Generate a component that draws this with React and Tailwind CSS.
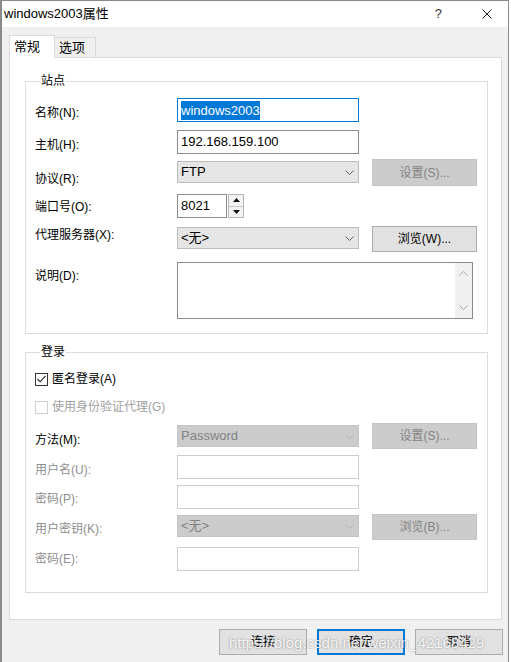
import React from 'react'

function Chevron({ color = '#606060' }) {
  return (
    <svg width="9" height="5" viewBox="0 0 9 5">
      <path d="M0.5 0.5 L4.5 4.5 L8.5 0.5" fill="none" stroke={color} strokeWidth="1" />
    </svg>
  )
}

function Row({ className, labelClass, label, disabled, children }) {
  return (
    <div className={`flex items-start ${className}`}>
      <div className={`w-[142px] shrink-0 text-[12px] leading-[16px] ${disabled ? 'text-[#8d8d8d]' : 'text-black'} ${labelClass}`}>
        {label}
      </div>
      {children}
    </div>
  )
}

function TextBox({ children, disabled, focused, className = 'w-[182px]' }) {
  return (
    <div
      className={`${className} h-[24px] flex items-center pl-[3px] bg-white border text-[13px] ${
        focused ? 'border-[#0078d7]' : disabled ? 'border-[#cccccc]' : 'border-[#8c8c8c]'
      }`}
    >
      {children}
    </div>
  )
}

function Combo({ value, disabled, className }) {
  return (
    <div
      className={`w-[182px] h-[22px] flex items-center justify-between pl-[3px] pr-[4px] border text-[13px] ${
        disabled ? 'bg-[#cccccc] border-[#c4c4c4] text-[#838383]' : 'bg-[#e5e5e5] border-[#bdbdbd] text-black'
      } ${className}`}
    >
      <span>{value}</span>
      <Chevron color={disabled ? '#b3b3b3' : '#606060'} />
    </div>
  )
}

function Btn({ children, disabled, className }) {
  return (
    <div
      className={`ml-[13px] w-[105px] flex items-center justify-center border text-[12px] ${
        disabled ? 'bg-[#cccccc] border-[#c4c4c4] text-[#838383]' : 'bg-[#e1e1e1] border-[#adadad] text-black'
      } ${className}`}
    >
      {children}
    </div>
  )
}

function CheckBox({ checked, disabled, label }) {
  return (
    <div className="flex items-center h-[16px]">
      <div
        className={`w-[13px] h-[13px] border bg-white flex items-center justify-center ${
          disabled ? 'border-[#cfcfcf]' : 'border-[#333333]'
        }`}
      >
        {checked && (
          <svg width="9" height="8" viewBox="0 0 9 8">
            <path d="M0.5 4 L3.2 6.8 L8.5 0.8" fill="none" stroke="#222" strokeWidth="1.1" />
          </svg>
        )}
      </div>
      <span className={`ml-[4px] text-[12px] leading-[16px] ${disabled ? 'text-[#a0a0a0]' : 'text-black'}`}>{label}</span>
    </div>
  )
}

export default function App() {
  return (
    <div className="relative w-[511px] h-[662px] bg-white overflow-hidden font-['Liberation_Sans','Noto_Sans_CJK_SC',sans-serif]">
      <div className="w-[509px] h-[662px] flex flex-col border-t border-l-2 border-r border-[#8a8a8a] bg-[#f0f0f0]">
        {/* title bar */}
        <div className="h-[26px] shrink-0 bg-white flex items-center pl-[2px]">
          <span className="text-[13px] text-black">windows2003属性</span>
          <span className="ml-auto text-[13px] text-[#333]">?</span>
          <svg className="ml-[40px] mr-[16px]" width="10" height="10" viewBox="0 0 10 10">
            <path d="M0.5 0.5 L9.5 9.5 M9.5 0.5 L0.5 9.5" stroke="#222" strokeWidth="1" />
          </svg>
        </div>

        {/* tabs */}
        <div className="flex items-end mt-[8px] ml-[7px] h-[22px]">
          <div className="relative z-10 h-[23px] -mb-px w-[46px] bg-white border-x border-t border-[#d9d9d9] pl-[4px] pt-[2px] text-[13px] leading-[18px]">
            常规
          </div>
          <div className="h-[20px] w-[42px] -ml-px border-x border-t border-[#d9d9d9] bg-[#f0f0f0] pl-[4px] text-[13px] leading-[20px]">
            选项
          </div>
        </div>

        {/* panel */}
        <div className="ml-[7px] w-[493px] h-[563px] shrink-0 bg-white border border-[#d9d9d9]">
          <fieldset className="mt-[15px] ml-[15px] w-[463px] border border-[#dcdcdc] pb-[14px] pl-[9px]">
            <legend className="ml-[5px] px-[1px] text-[12px] leading-[16px]">站点</legend>
            <Row className="mt-[9px] h-[24px]" labelClass="mt-[7px]" label="名称(N):">
              <TextBox focused>
                <span className="bg-[#0078d7] text-white leading-[19px]">windows2003</span>
              </TextBox>
            </Row>
            <Row className="mt-[8px] h-[24px]" labelClass="mt-[7px]" label="主机(H):">
              <TextBox>192.168.159.100</TextBox>
            </Row>
            <Row className="mt-[5px] h-[27px]" labelClass="mt-[12px]" label="协议(R):">
              <Combo value="FTP" className="mt-[2px]" />
              <Btn disabled className="h-[27px]">设置(S)...</Btn>
            </Row>
            <Row className="mt-[8px] h-[24px]" labelClass="mt-[5px]" label="端口号(O):">
              <TextBox className="w-[50px]">8021</TextBox>
              <div className="ml-px w-[16px] h-[24px] flex flex-col border border-[#b5b5b5] bg-[#f3f3f3]">
                <div className="flex-1 flex items-center justify-center border-b border-[#c8c8c8]">
                  <svg width="7" height="4" viewBox="0 0 7 4"><path d="M0 4 L3.5 0 L7 4 Z" fill="#111" /></svg>
                </div>
                <div className="flex-1 flex items-center justify-center">
                  <svg width="7" height="4" viewBox="0 0 7 4"><path d="M0 0 L3.5 4 L7 0 Z" fill="#111" /></svg>
                </div>
              </div>
            </Row>
            <Row className="mt-[8px] h-[26px]" labelClass="mt-[1px]" label="代理服务器(X):">
              <Combo value="<无>" className="mt-[1px]" />
              <Btn className="h-[26px]">浏览(W)...</Btn>
            </Row>
            <Row className="mt-[10px] h-[57px]" labelClass="mt-[6px]" label="说明(D):">
              <div className="w-[296px] h-[57px] border border-[#8c8c8c] bg-white flex justify-end">
                <div className="w-[17px] h-full bg-[#f0f0f0] flex flex-col items-center justify-between py-[8px]">
                  <svg width="9" height="5" viewBox="0 0 9 5"><path d="M0.5 4.5 L4.5 0.5 L8.5 4.5" fill="none" stroke="#a6a6a6" strokeWidth="1" /></svg>
                  <Chevron color="#a6a6a6" />
                </div>
              </div>
            </Row>
          </fieldset>

          <fieldset className="mt-[10px] ml-[15px] w-[463px] border border-[#dcdcdc] pb-[21px] pl-[9px]">
            <legend className="ml-[5px] px-[1px] text-[12px] leading-[16px]">登录</legend>
            <div className="mt-[11px]">
              <CheckBox checked label="匿名登录(A)" />
            </div>
            <div className="mt-[12px]">
              <CheckBox disabled label="使用身份验证代理(G)" />
            </div>
            <Row className="mt-[8px] h-[26px]" labelClass="mt-[9px]" label="方法(M):">
              <Combo disabled value="Password" className="mt-[2px]" />
              <Btn disabled className="h-[26px]">设置(S)...</Btn>
            </Row>
            <Row className="mt-[6px] h-[24px]" labelClass="mt-[7px]" label="用户名(U):" disabled>
              <TextBox disabled />
            </Row>
            <Row className="mt-[6px] h-[24px]" labelClass="mt-[6px]" label="密码(P):" disabled>
              <TextBox disabled />
            </Row>
            <Row className="mt-[5px] h-[26px]" labelClass="mt-[7px]" label="用户密钥(K):" disabled>
              <Combo disabled value="<无>" className="mt-[1px]" />
              <Btn disabled className="h-[26px]">浏览(B)...</Btn>
            </Row>
            <Row className="mt-[7px] h-[24px]" labelClass="mt-[4px]" label="密码(E):" disabled>
              <TextBox disabled />
            </Row>
          </fieldset>
        </div>

        {/* bottom buttons */}
        <div className="flex mt-[9px] ml-[217px] gap-[10px]">
          <div className="w-[88px] h-[26px] flex items-center justify-center bg-[#e1e1e1] border border-[#adadad] text-[12px]">连接</div>
          <div className="w-[88px] h-[26px] flex items-center justify-center bg-[#e1e1e1] border-2 border-[#0078d7] text-[12px]">确定</div>
          <div className="w-[88px] h-[26px] flex items-center justify-center bg-[#e1e1e1] border border-[#adadad] text-[12px]">取消</div>
        </div>
      </div>

      {/* watermark */}
      <div className="absolute left-[229px] top-[633px] text-[15px] leading-[20px] whitespace-nowrap text-white/90 [text-shadow:0_0_2px_rgba(0,0,0,0.45)] pointer-events-none">
        https://blog.csdn.net/weixin_42168429
      </div>
    </div>
  )
}
